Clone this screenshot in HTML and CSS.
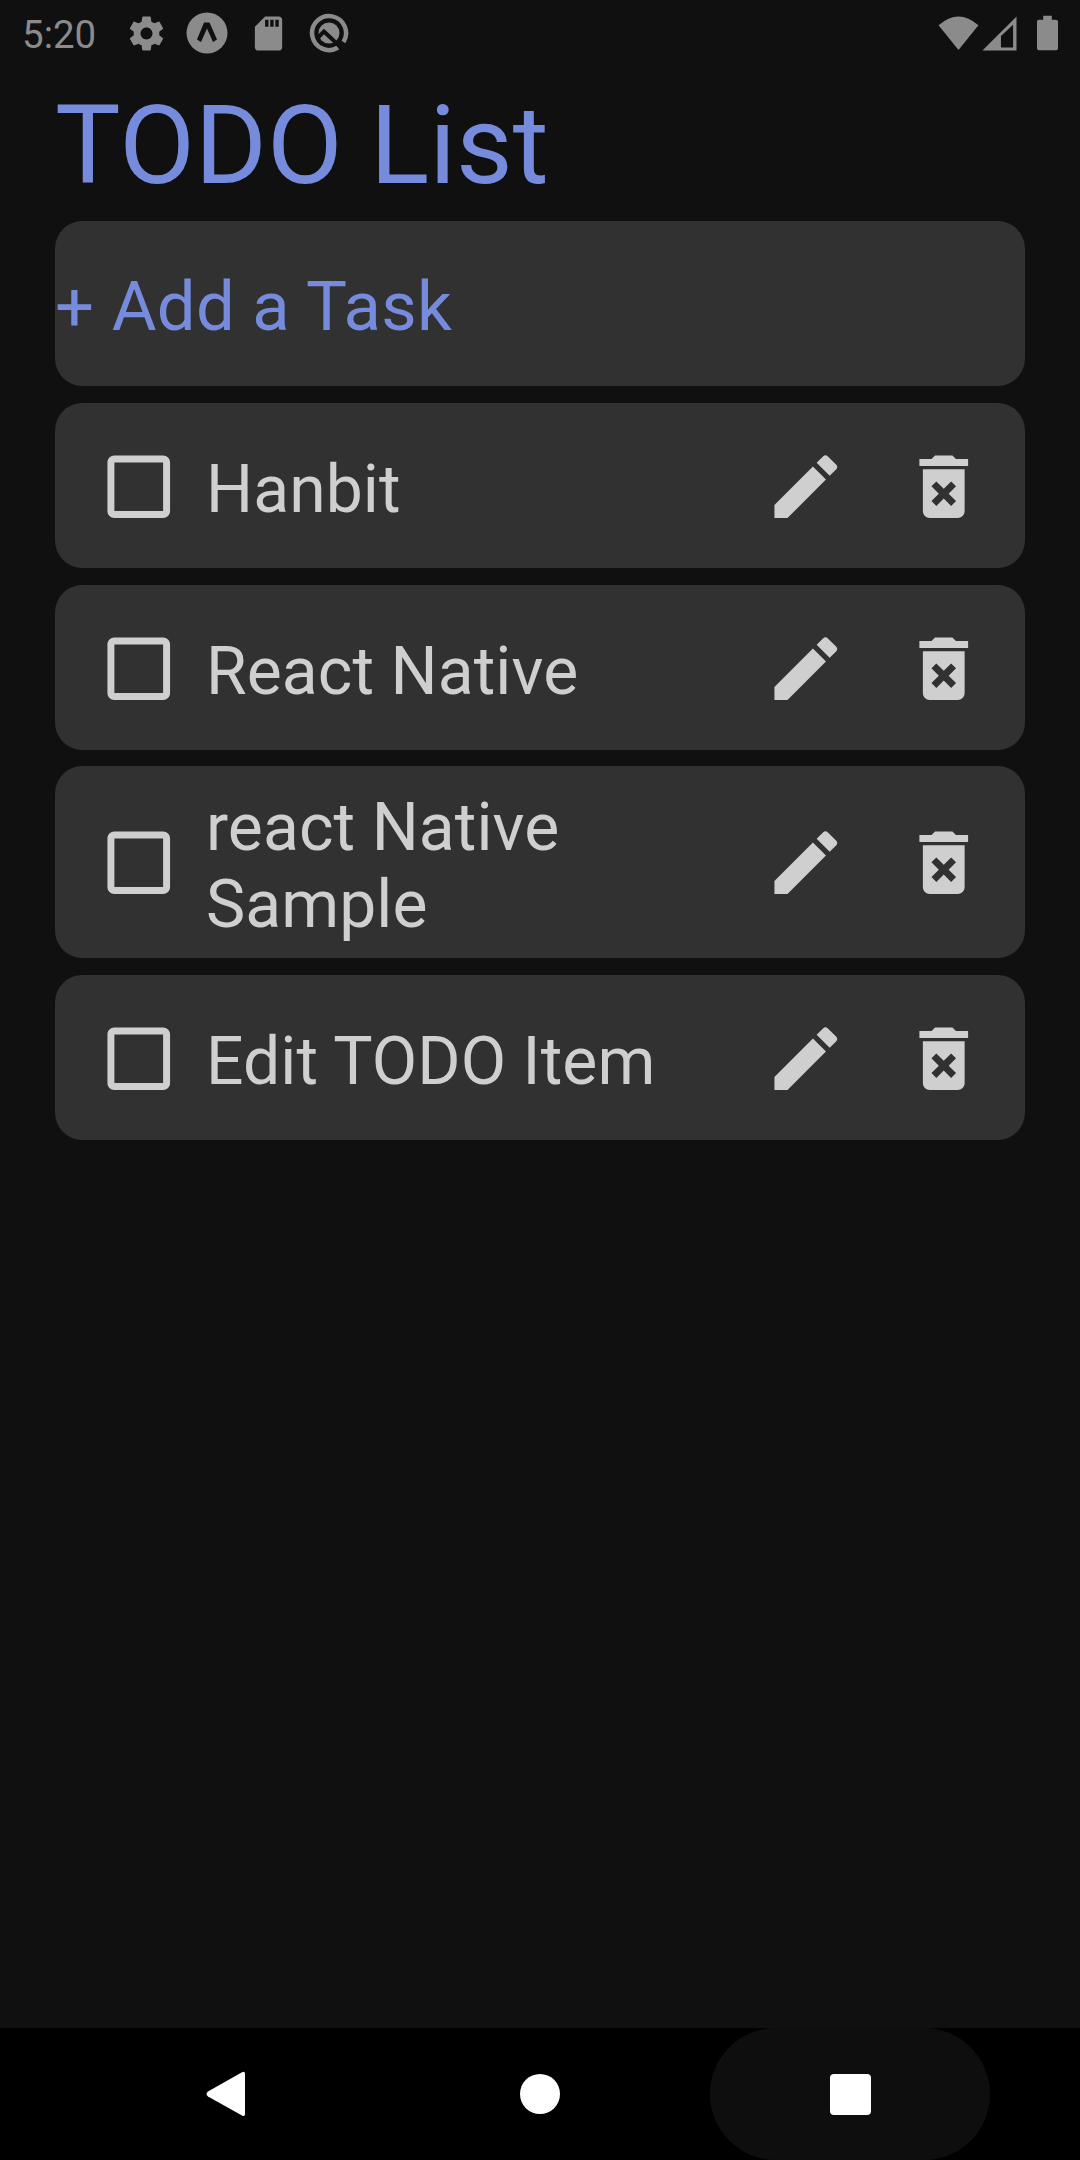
FILE: index.html
```html
<!DOCTYPE html>
<html lang="en">
<head>
<meta charset="utf-8">
<title>TODO List</title>
<link rel="stylesheet" href="styles.css">
</head>
<body>
<svg class="defs" aria-hidden="true">
  <symbol id="box" viewBox="0 0 24 24"><path d="M19 5v14H5V5h14m0-2H5c-1.100 0-2 .9-2 2v14c0 1.100.9 2 2 2h14c1.100 0 2-.9 2-2V5c0-1.100-.9-2-2-2z"/></symbol>
  <symbol id="pencil" viewBox="0 0 24 24"><path d="M3 17.250V21h3.750L17.810 9.940l-3.750-3.750L3 17.250zM20.710 7.040a.996.996 0 0 0 0-1.410l-2.340-2.340a.996.996 0 0 0-1.410 0l-1.830 1.830 3.750 3.750 1.830-1.830z"/></symbol>
  <symbol id="trash" viewBox="0 0 24 24"><path fill-rule="evenodd" d="M6 19c0 1.100.9 2 2 2h8c1.100 0 2-.9 2-2V7H6v12zm2.460-7.120l1.410-1.410L12 12.590l2.120-2.120 1.410 1.410L13.410 14l2.120 2.120-1.410 1.410L12 15.410l-2.120 2.120-1.410-1.410L10.590 14l-2.130-2.120zM15.500 4l-1-1h-5l-1 1H5v2h14V4z"/></symbol>
</svg>
<div class="screen">
  <header class="status">
    <span class="clock">5:20</span>
    <svg class="gear" viewBox="0 0 24 24"><path d="M19.430 12.980c.04-.32.07-.64.07-.98s-.03-.66-.07-.98l2.110-1.650c.19-.15.24-.42.12-.64l-2-3.460c-.12-.22-.39-.3-.61-.22l-2.490 1c-.52-.4-1.080-.73-1.690-.98l-.38-2.650C14.460 2.180 14.250 2 14 2h-4c-.25 0-.46.18-.49.42l-.38 2.650c-.61.25-1.170.59-1.690.98l-2.490-1c-.23-.09-.49 0-.61.22l-2 3.460c-.13.22-.07.49.12.64l2.110 1.650c-.04.32-.07.65-.07.98s.03.66.07.98l-2.110 1.650c-.19.15-.24.42-.12.64l2 3.460c.12.22.39.3.61.22l2.490-1c.52.4 1.080.73 1.690.98l.38 2.650c.03.24.24.42.49.42h4c.25 0 .46-.18.49-.42l.38-2.650c.61-.25 1.170-.59 1.690-.98l2.490 1c.23.09.49 0 .61-.22l2-3.460c.12-.22.07-.49-.12-.64l-2.110-1.650zM12 15.500c-1.930 0-3.500-1.570-3.500-3.500s1.570-3.500 3.500-3.500 3.500 1.570 3.500 3.500-1.570 3.500-3.500 3.500z"/></svg>
    <svg class="expo" viewBox="0 0 42 42"><circle cx="21" cy="21" r="20.500"/><path class="cut" d="M18 10.500h5.500l7.500 17-4 2.500-6-13.500L15 30l-4-2.500z"/></svg>
    <svg class="sd" viewBox="0 0 24 24"><path d="M18 2h-8L4.020 8 4 20c0 1.100.9 2 2 2h12c1.100 0 2-.9 2-2V4c0-1.100-.9-2-2-2zm-6 6h-2V4h2v4zm3 0h-2V4h2v4zm3 0h-2V4h2v4z"/></svg>
    <svg class="quick" viewBox="0 0 40 40"><path class="ring" d="M29 34.500A17 17 0 1 1 34.500 29"/><circle cx="20" cy="20" r="10.500"/><path class="slash" d="M9 24.500l6-6L32 34.500"/></svg>
    <span class="spacer"></span>
    <svg class="wifi" viewBox="0 0 42 36"><path d="M.5 9.500Q21-8.500 41.500 9.500L21 35z"/></svg>
    <svg class="cell" viewBox="0 0 36 36"><path fill-rule="evenodd" d="M.5 35.500 35.500 .5v35zM19.500 20.500v12h12.500V9z"/></svg>
    <svg class="battery" viewBox="0 0 22 36"><path d="M6.500 0h9v4H19q3 0 3 2v28q0 2-2 2H2q-2 0-2-2V6q0-2 2-2h4.500z"/></svg>
  </header>
  <main class="content">
    <h1 class="title">TODO List</h1>
    <div class="card add"><span class="add-text">+ Add a Task</span></div>
    <div class="card"><svg class="icon"><use href="#box"/></svg><span class="text">Hanbit</span><svg class="icon edit"><use href="#pencil"/></svg><svg class="icon"><use href="#trash"/></svg></div>
    <div class="card"><svg class="icon"><use href="#box"/></svg><span class="text">React Native</span><svg class="icon edit"><use href="#pencil"/></svg><svg class="icon"><use href="#trash"/></svg></div>
    <div class="card tall"><svg class="icon"><use href="#box"/></svg><span class="text">react Native Sample</span><svg class="icon edit"><use href="#pencil"/></svg><svg class="icon"><use href="#trash"/></svg></div>
    <div class="card"><svg class="icon"><use href="#box"/></svg><span class="text">Edit TODO Item</span><svg class="icon edit"><use href="#pencil"/></svg><svg class="icon"><use href="#trash"/></svg></div>
  </main>
  <nav class="nav">
    <svg class="back" viewBox="0 0 40 46"><path d="M2 20.500 36 1.200Q39 0 39 3v40q0 3-3 1.500L2 25.500q-3-2.500 0-5z"/></svg>
    <span class="home"></span>
    <span class="recent"><span class="square"></span></span>
  </nav>
</div>
</body>
</html>
```
FILE: styles.css
```css
body {
  margin: 0;
  background: #101010;
  font-family: Roboto, "Liberation Sans", sans-serif;
}

.defs {
  display: none;
}

.screen {
  width: 1080px;
  height: 2160px;
  display: flex;
  flex-direction: column;
  overflow: hidden;
  background: #101010;
}

.status {
  height: 66px;
  display: flex;
  align-items: center;
  color: #8b8b8b;
  fill: #8b8b8b;
  box-sizing: border-box;
  padding: 0 22px;
}

.status svg {
  flex: none;
}

.clock {
  font-size: 38.500px;
  line-height: 66px;
  width: 104px;
  padding-top: 3px;
}

.gear {
  width: 41px;
  height: 41px;
}

.expo {
  width: 42px;
  height: 42px;
  margin-left: 19px;
}

.cut {
  fill: #101010;
}

.sd {
  width: 41px;
  height: 41px;
  margin-left: 20px;
}

.quick {
  width: 40px;
  height: 40px;
  margin-left: 20px;
}

.ring {
  fill: none;
  stroke: #8b8b8b;
  stroke-width: 4.500;
}

.slash {
  fill: none;
  stroke: #101010;
  stroke-width: 4;
}

.spacer {
  flex: 1;
}

.wifi {
  width: 41px;
  height: 35px;
}

.cell {
  width: 35px;
  height: 35px;
  margin-left: 3px;
}

.battery {
  width: 21px;
  height: 36px;
  margin-left: 20px;
}

.content {
  flex: 1;
  padding: 0 55px;
}

.title {
  margin: 0;
  height: 155px;
  line-height: 159px;
  font-size: 110px;
  font-weight: 400;
  color: #778bdd;
}

.card {
  height: 165px;
  margin-bottom: 17px;
  padding: 0 40px 0 41.500px;
  box-sizing: border-box;
  display: flex;
  align-items: center;
  border-radius: 27.500px;
  background: #313131;
  color: #cfcfcf;
  fill: #cfcfcf;
}

.card.add {
  padding: 0;
}

.add-text {
  margin-top: 6px;
  font-size: 68.750px;
  letter-spacing: 0.300px;
  color: #778bdd;
}

.card:nth-child(4) {
  margin-bottom: 16px;
}

.card.tall {
  height: 192px;
}

.icon {
  flex: none;
  width: 83.500px;
  height: 83.500px;
  margin-top: 2px;
}

.text {
  flex: 1;
  margin: 8px 50px 0 26px;
  font-size: 66px;
  line-height: 77px;
  letter-spacing: 0.080px;
}

.edit {
  margin-right: 54.500px;
}

.nav {
  height: 132px;
  display: flex;
  align-items: center;
  background: #000;
  fill: #fff;
}

.back {
  width: 40px;
  height: 46px;
  margin-left: 206px;
}

.home {
  width: 40px;
  height: 40px;
  margin-left: 274px;
  border-radius: 50%;
  background: #fff;
}

.recent {
  width: 280px;
  height: 132px;
  margin-left: 150px;
  display: flex;
  align-items: center;
  justify-content: center;
  border-radius: 66px;
  background: #0e0e0e;
}

.square {
  width: 41.500px;
  height: 41.500px;
  margin: 1px 0 0 1px;
  border-radius: 4px;
  background: #fff;
}
```
